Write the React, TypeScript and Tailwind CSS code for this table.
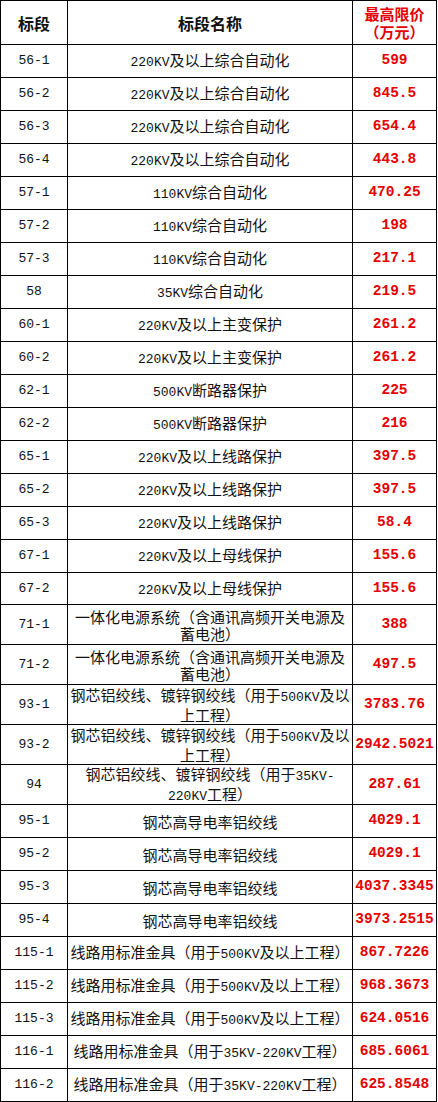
import React from "react";

type Row = {
  code: string;
  name: string | string[];
  price: string;
  h: string;
};

const rows: Row[] = [
  { code: "56-1", name: "220KV及以上综合自动化", price: "599", h: "h-[33px]" },
  { code: "56-2", name: "220KV及以上综合自动化", price: "845.5", h: "h-[33px]" },
  { code: "56-3", name: "220KV及以上综合自动化", price: "654.4", h: "h-[33px]" },
  { code: "56-4", name: "220KV及以上综合自动化", price: "443.8", h: "h-[33px]" },
  { code: "57-1", name: "110KV综合自动化", price: "470.25", h: "h-[33px]" },
  { code: "57-2", name: "110KV综合自动化", price: "198", h: "h-[33px]" },
  { code: "57-3", name: "110KV综合自动化", price: "217.1", h: "h-[33px]" },
  { code: "58", name: "35KV综合自动化", price: "219.5", h: "h-[33px]" },
  { code: "60-1", name: "220KV及以上主变保护", price: "261.2", h: "h-[33px]" },
  { code: "60-2", name: "220KV及以上主变保护", price: "261.2", h: "h-[33px]" },
  { code: "62-1", name: "500KV断路器保护", price: "225", h: "h-[33px]" },
  { code: "62-2", name: "500KV断路器保护", price: "216", h: "h-[33px]" },
  { code: "65-1", name: "220KV及以上线路保护", price: "397.5", h: "h-[33px]" },
  { code: "65-2", name: "220KV及以上线路保护", price: "397.5", h: "h-[33px]" },
  { code: "65-3", name: "220KV及以上线路保护", price: "58.4", h: "h-[33px]" },
  { code: "67-1", name: "220KV及以上母线保护", price: "155.6", h: "h-[33px]" },
  { code: "67-2", name: "220KV及以上母线保护", price: "155.6", h: "h-[32px]" },
  { code: "71-1", name: ["一体化电源系统（含通讯高频开关电源及", "蓄电池）"], price: "388", h: "h-[40px]" },
  { code: "71-2", name: ["一体化电源系统（含通讯高频开关电源及", "蓄电池）"], price: "497.5", h: "h-[40px]" },
  { code: "93-1", name: ["钢芯铝绞线、镀锌钢绞线（用于500KV及以", "上工程）"], price: "3783.76", h: "h-[40px]" },
  { code: "93-2", name: ["钢芯铝绞线、镀锌钢绞线（用于500KV及以", "上工程）"], price: "2942.5021", h: "h-[40px]" },
  { code: "94", name: ["钢芯铝绞线、镀锌钢绞线（用于35KV-", "220KV工程）"], price: "287.61", h: "h-[40px]" },
  { code: "95-1", name: "钢芯高导电率铝绞线", price: "4029.1", h: "h-[33px]" },
  { code: "95-2", name: "钢芯高导电率铝绞线", price: "4029.1", h: "h-[33px]" },
  { code: "95-3", name: "钢芯高导电率铝绞线", price: "4037.3345", h: "h-[33px]" },
  { code: "95-4", name: "钢芯高导电率铝绞线", price: "3973.2515", h: "h-[33px]" },
  { code: "115-1", name: "线路用标准金具（用于500KV及以上工程）", price: "867.7226", h: "h-[33px]" },
  { code: "115-2", name: "线路用标准金具（用于500KV及以上工程）", price: "968.3673", h: "h-[33px]" },
  { code: "115-3", name: "线路用标准金具（用于500KV及以上工程）", price: "624.0516", h: "h-[33px]" },
  { code: "116-1", name: "线路用标准金具（用于35KV-220KV工程）", price: "685.6061", h: "h-[33px]" },
  { code: "116-2", name: "线路用标准金具（用于35KV-220KV工程）", price: "625.8548", h: "h-[33px]" },
];

// latin runs get the narrow mono face, like the half-width glyphs in the sheet
function Mixed({ text }: { text: string }) {
  const parts = text.split(/([\x00-\x7F]+)/).filter(Boolean);
  return (
    <>
      {parts.map((p, i) =>
        /^[\x00-\x7F]+$/.test(p) ? (
          <span key={i} className="font-['Liberation_Mono',monospace] text-[13px]">
            {p}
          </span>
        ) : (
          <span key={i}>{p}</span>
        )
      )}
    </>
  );
}

export default function App() {
  return (
    <main className="min-h-screen bg-white font-['Noto_Sans_CJK_SC',sans-serif] text-[#111]">
      <div className="w-[437px] border-l border-t border-black">
        <div className="flex h-[44px] border-b border-black">
          <div className="flex w-[67px] items-center justify-center border-r border-black text-[16px] font-bold">
            标段
          </div>
          <div className="flex w-[285px] items-center justify-center border-r border-black text-[16px] font-bold">
            标段名称
          </div>
          <div className="flex w-[84px] flex-col items-center justify-center border-r border-black text-[15px] font-bold leading-[18px] text-[#e60000]">
            <div>最高限价</div>
            <div>（万元）</div>
          </div>
        </div>

        {rows.map((r) => (
          <div key={r.code} className={`flex border-b border-black ${r.h}`}>
            <div className="flex w-[67px] items-center justify-center border-r border-black font-['Liberation_Mono',monospace] text-[13px]">
              {r.code}
            </div>
            <div className="flex w-[285px] flex-col items-center justify-center border-r border-black text-[15px] leading-[17px]">
              {Array.isArray(r.name) ? (
                r.name.map((line, i) => (
                  <div key={i} className="whitespace-nowrap">
                    <Mixed text={line} />
                  </div>
                ))
              ) : (
                <div className="whitespace-nowrap">
                  <Mixed text={r.name} />
                </div>
              )}
            </div>
            <div className="flex w-[84px] items-center justify-center border-r border-black font-['Liberation_Mono',monospace] text-[14.5px] font-bold text-[#e60000]">
              {r.price}
            </div>
          </div>
        ))}
      </div>
    </main>
  );
}
